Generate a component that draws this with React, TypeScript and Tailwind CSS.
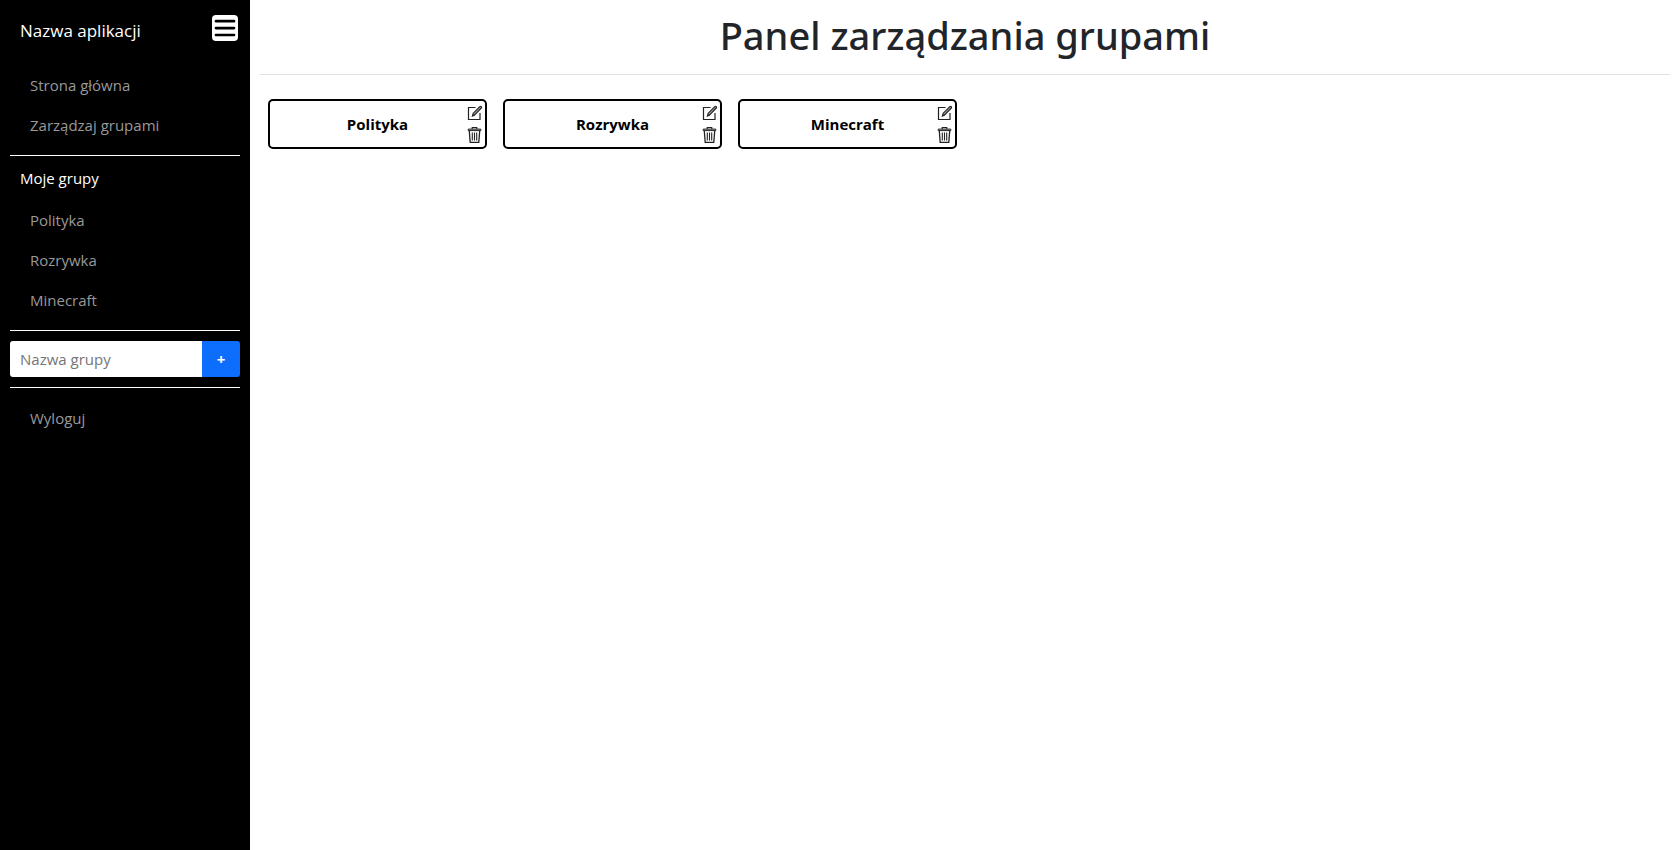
import { useState } from "react";
import type { FormEvent } from "react";

function MenuIcon() {
  return (
    <svg viewBox="0 0 26 26" className="size-[26px]" aria-hidden="true">
      <rect width="26" height="26" rx="4" fill="#fff" />
      <path d="M4 6.2h18M4 13.1h18M4 20h18" stroke="#000" strokeWidth="2.7" strokeLinecap="round" />
    </svg>
  );
}

function EditIcon() {
  return (
    <svg viewBox="0 0 16 16" className="size-4" fill="none" stroke="#222" aria-hidden="true">
      <path d="M8.5 2.5H1.5v12h11.5V8" strokeWidth="1.2" />
      <path d="M5.4 11l.8-2.8 6.6-6.6q.7-.7 1.5 0 .7.7 0 1.4L7.8 9.8z" strokeWidth="1.1" fill="#999" />
      <path d="M5.4 11l2.4-1.2" strokeWidth="1.2" />
    </svg>
  );
}

function TrashIcon() {
  return (
    <svg viewBox="0 0 16 18" className="h-[18px] w-4" fill="none" stroke="#222" aria-hidden="true">
      <path d="M5.2 3V1.5h4.6V3" strokeWidth="1.1" />
      <path d="M1.2 3.1h12.6v1.5H1.2z" strokeWidth="1" fill="#bbb" />
      <path d="M2.3 5l.9 11.4h8.6L12.7 5" strokeWidth="1.3" />
      <path d="M5.3 6.5v8M7.5 6.5v8M9.7 6.5v8" strokeWidth="1.1" />
    </svg>
  );
}

function NavLink({ label }: { label: string }) {
  return (
    <a href="#" className="block px-5 py-2 leading-6 text-[#999] hover:text-white">
      {label}
    </a>
  );
}

function GroupCard({ name, onRemove }: { name: string; onRemove: () => void }) {
  return (
    <li className="relative flex h-[50px] w-[219px] items-center justify-center rounded-[5px] border-2 border-black bg-white">
      <span className="text-[15px] font-bold text-black">{name}</span>
      <div className="absolute top-1 right-0.5 flex flex-col gap-[5px]">
        <button type="button" aria-label={`Edytuj ${name}`}>
          <EditIcon />
        </button>
        <button type="button" aria-label={`Usuń ${name}`} onClick={onRemove}>
          <TrashIcon />
        </button>
      </div>
    </li>
  );
}

export default function App() {
  const [groups, setGroups] = useState(["Polityka", "Rozrywka", "Minecraft"]);
  const [name, setName] = useState("");

  const addGroup = (event: FormEvent) => {
    event.preventDefault();
    if (!name.trim()) return;
    setGroups([...groups, name.trim()]);
    setName("");
  };

  return (
    <div className="flex min-h-screen bg-white font-['Open_Sans','Noto_Sans',sans-serif] text-[15px] text-[#212529]">
      <aside className="w-[250px] shrink-0 bg-black px-2.5">
        <div className="flex h-[65px] items-start justify-between pt-[15px] pr-0.5 pl-2.5">
          <a href="#" className="text-[17px] leading-8 text-white">
            Nazwa aplikacji
          </a>
          <button type="button" aria-label="Menu">
            <MenuIcon />
          </button>
        </div>
        <nav className="border-b border-white pb-2.5">
          <NavLink label="Strona główna" />
          <NavLink label="Zarządzaj grupami" />
        </nav>
        <nav className="border-b border-white py-2.5">
          <h2 className="mb-2.5 px-2.5 leading-6 text-white">Moje grupy</h2>
          {groups.map((group) => (
            <NavLink key={group} label={group} />
          ))}
        </nav>
        <form onSubmit={addGroup} className="flex border-b border-white py-2.5">
          <input
            aria-label="Nazwa grupy"
            placeholder="Nazwa grupy"
            value={name}
            onChange={(event) => setName(event.target.value)}
            className="h-9 min-w-0 flex-1 rounded-l-[3px] bg-white px-2.5 text-black outline-none placeholder:text-[#757575]"
          />
          <button
            type="submit"
            aria-label="Dodaj grupę"
            className="h-9 w-[38px] rounded-r-[3px] bg-[#0d6efd] font-bold text-white"
          >
            +
          </button>
        </form>
        <div className="pt-2.5">
          <NavLink label="Wyloguj" />
        </div>
      </aside>
      <main className="min-w-0 flex-1 px-2.5">
        <h1 className="border-b border-[#dee2e6] pt-[11px] pb-[15px] text-center font-['Noto_Sans','Open_Sans',sans-serif] text-[38px] leading-12 font-medium">
          Panel zarządzania grupami
        </h1>
        <ul className="flex flex-wrap gap-4 px-2 pt-6">
          {groups.map((group) => (
            <GroupCard
              key={group}
              name={group}
              onRemove={() => setGroups(groups.filter((item) => item !== group))}
            />
          ))}
        </ul>
      </main>
    </div>
  );
}
